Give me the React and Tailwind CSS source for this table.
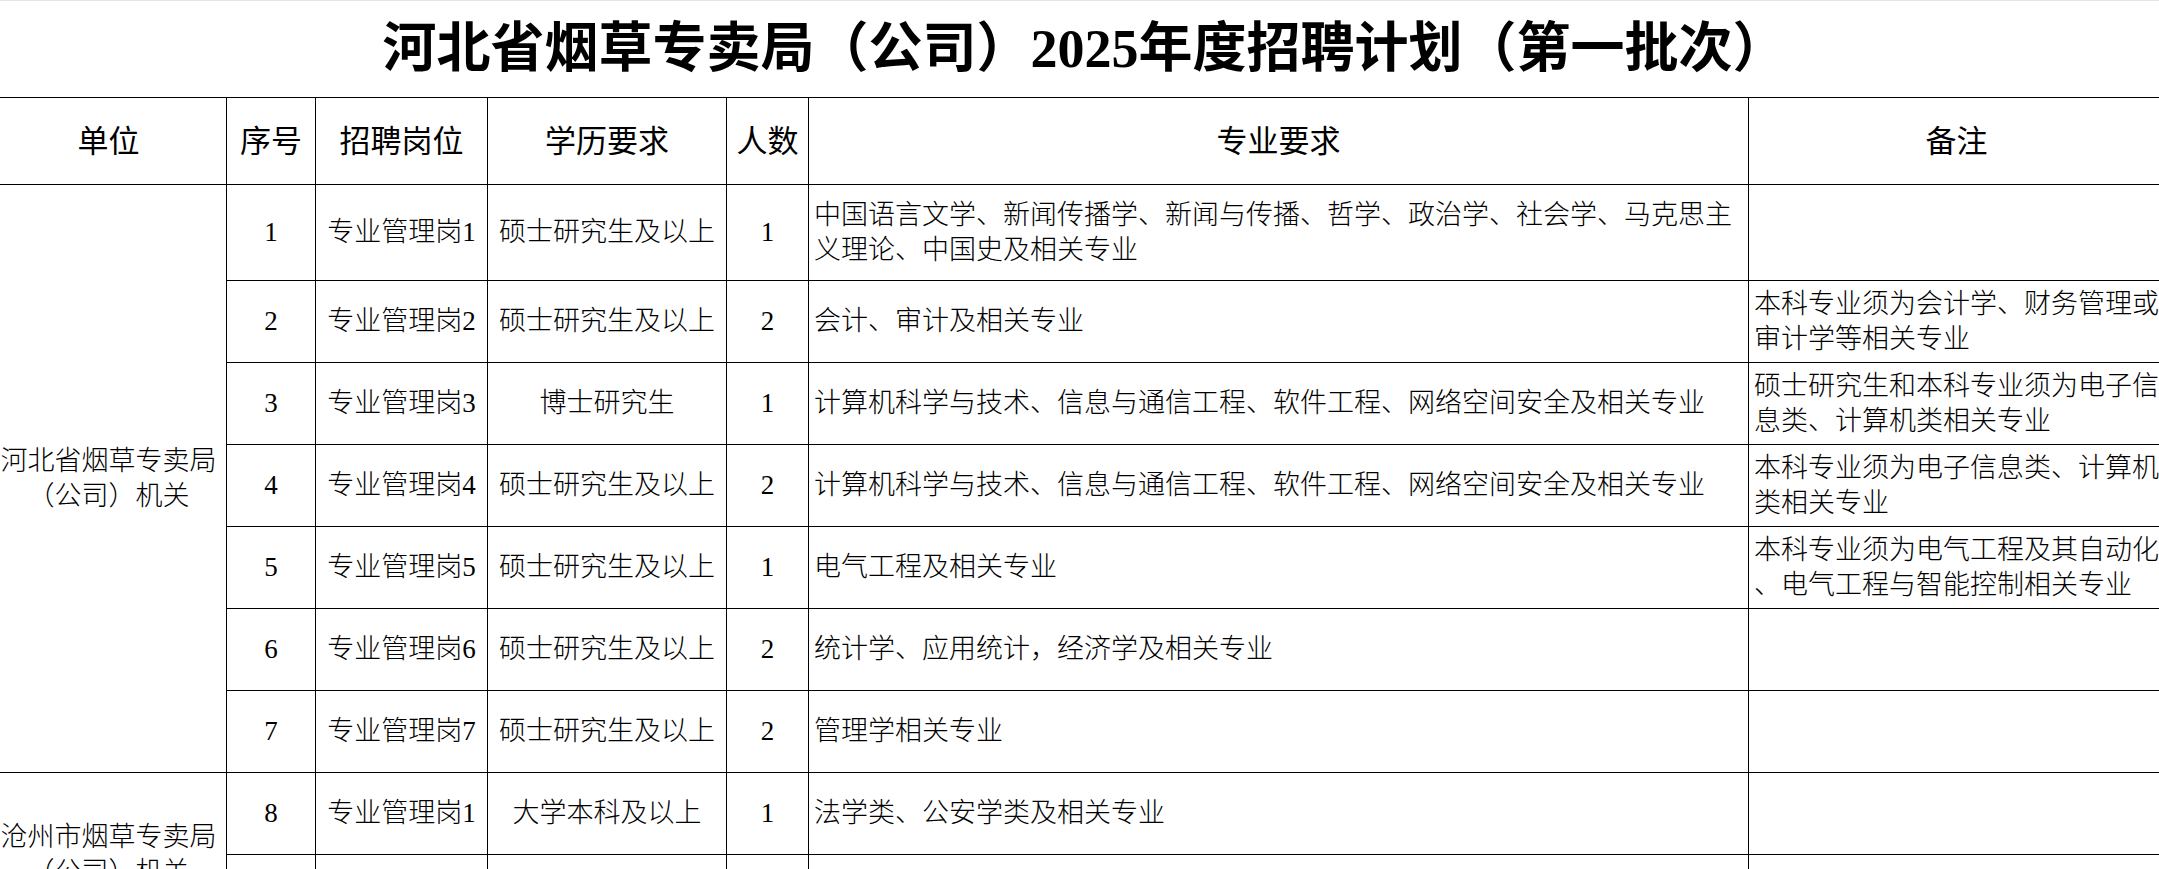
const ROWS = [
  { no: 1, post: '专业管理岗1', edu: '硕士研究生及以上', num: 1, major: '中国语言文学、新闻传播学、新闻与传播、哲学、政治学、社会学、马克思主义理论、中国史及相关专业', note: [] },
  { no: 2, post: '专业管理岗2', edu: '硕士研究生及以上', num: 2, major: '会计、审计及相关专业', note: ['本科专业须为会计学、财务管理或', '审计学等相关专业'] },
  { no: 3, post: '专业管理岗3', edu: '博士研究生', num: 1, major: '计算机科学与技术、信息与通信工程、软件工程、网络空间安全及相关专业', note: ['硕士研究生和本科专业须为电子信', '息类、计算机类相关专业'] },
  { no: 4, post: '专业管理岗4', edu: '硕士研究生及以上', num: 2, major: '计算机科学与技术、信息与通信工程、软件工程、网络空间安全及相关专业', note: ['本科专业须为电子信息类、计算机', '类相关专业'] },
  { no: 5, post: '专业管理岗5', edu: '硕士研究生及以上', num: 1, major: '电气工程及相关专业', note: ['本科专业须为电气工程及其自动化', '、电气工程与智能控制相关专业'] },
  { no: 6, post: '专业管理岗6', edu: '硕士研究生及以上', num: 2, major: '统计学、应用统计，经济学及相关专业', note: [] },
  { no: 7, post: '专业管理岗7', edu: '硕士研究生及以上', num: 2, major: '管理学相关专业', note: [] },
];

const cell = 'border border-black align-middle px-[5px] py-0';

export default function App() {
  return (
    <div className="w-[2159px] h-[869px] overflow-hidden bg-white border-t border-[#e5e5e5] font-['Liberation_Serif','Noto_Sans_CJK_SC',serif] text-black">
      {/* title row, no borders */}
      <div className="h-[96px] flex items-center justify-center pl-[10px]">
        <h1 className="text-[54px] leading-none font-bold">
          河北省烟草专卖局（公司）2025年度招聘计划（第一批次）
        </h1>
      </div>

      <table className="ml-[-10px] border-collapse table-fixed w-[2174px] text-[27px] leading-[35px] font-light">
        <colgroup>
          <col className="w-[236px]" />
          <col className="w-[89px]" />
          <col className="w-[172px]" />
          <col className="w-[239px]" />
          <col className="w-[82px]" />
          <col className="w-[940px]" />
          <col className="w-[416px]" />
        </colgroup>
        <thead>
          <tr className="h-[87px] text-[31px] font-normal">
            <th className={`${cell} font-normal text-center`}>单位</th>
            <th className={`${cell} font-normal text-center`}>序号</th>
            <th className={`${cell} font-normal text-center`}>招聘岗位</th>
            <th className={`${cell} font-normal text-center`}>学历要求</th>
            <th className={`${cell} font-normal text-center`}>人数</th>
            <th className={`${cell} font-normal text-center`}>专业要求</th>
            <th className={`${cell} font-normal text-center`}>备注</th>
          </tr>
        </thead>
        <tbody>
          {ROWS.map((r, i) => (
            <tr key={r.no} className={i === 0 ? 'h-[96px]' : 'h-[82px]'}>
              {i === 0 && (
                <td rowSpan={7} className={`${cell} text-center`}>
                  河北省烟草专卖局<br />（公司）机关
                </td>
              )}
              <td className={`${cell} text-center`}>{r.no}</td>
              <td className={`${cell} text-center whitespace-nowrap`}>{r.post}</td>
              <td className={`${cell} text-center whitespace-nowrap`}>{r.edu}</td>
              <td className={`${cell} text-center`}>{r.num}</td>
              <td className={`${cell} text-left`}>{r.major}</td>
              <td className={`${cell} text-left whitespace-nowrap`}>
                {r.note.map((line) => (
                  <div key={line}>{line}</div>
                ))}
              </td>
            </tr>
          ))}
          <tr className="h-[82px]">
            <td rowSpan={2} className={`${cell} text-center`}>
              沧州市烟草专卖局<br />（公司）机关
            </td>
            <td className={`${cell} text-center`}>8</td>
            <td className={`${cell} text-center whitespace-nowrap`}>专业管理岗1</td>
            <td className={`${cell} text-center whitespace-nowrap`}>大学本科及以上</td>
            <td className={`${cell} text-center`}>1</td>
            <td className={`${cell} text-left`}>法学类、公安学类及相关专业</td>
            <td className={cell}></td>
          </tr>
          <tr className="h-[82px]">
            <td className={cell}></td>
            <td className={cell}></td>
            <td className={cell}></td>
            <td className={cell}></td>
            <td className={cell}></td>
            <td className={cell}></td>
          </tr>
        </tbody>
      </table>
    </div>
  );
}
